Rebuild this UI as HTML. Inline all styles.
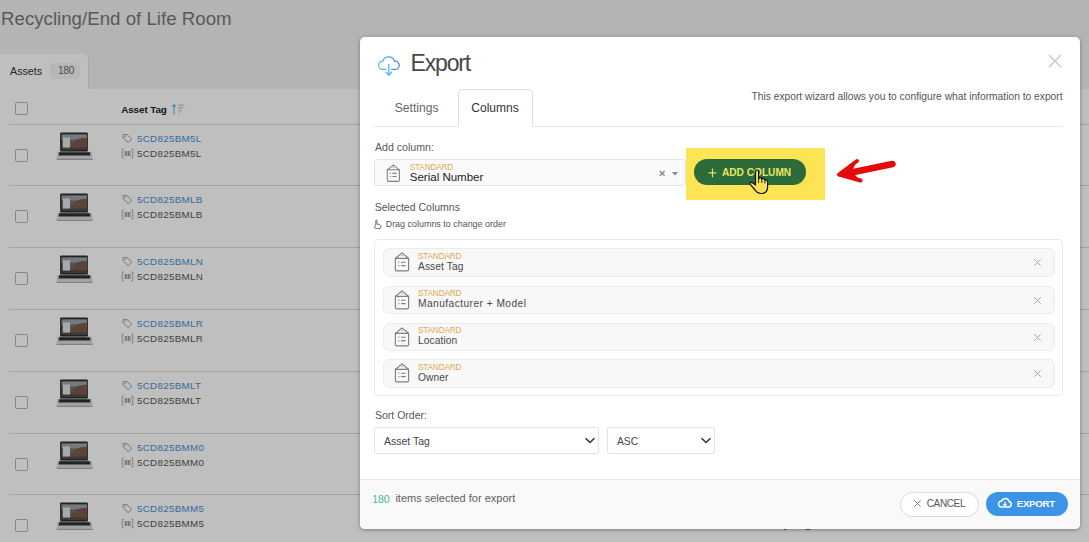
<!DOCTYPE html>
<html><head><meta charset="utf-8"><style>
html,body{margin:0;padding:0;width:1089px;height:542px;overflow:hidden;background:#fff}
body{position:relative;font-family:"Liberation Sans",sans-serif}
.t{position:absolute;line-height:1;white-space:nowrap}
.r{position:absolute;display:block}
</style></head><body>
<div class="r" style="left:0px;top:0px;width:1089px;height:89px;background:#f0f0f0"></div>
<div class="r" style="left:0px;top:89px;width:1089px;height:453px;background:#fff"></div>
<div class="r" style="left:0px;top:54px;width:89px;height:35px;background:#fff;border-top-right-radius:5px;border-right:1px solid #e2e2e2;box-sizing:border-box"></div>
<div class="t" style="left:1.00px;top:9.97px;font-size:18.7px;color:#787878;font-weight:400;">Recycling/End of Life Room</div>
<div class="t" style="left:10.00px;top:65.74px;font-size:10.7px;color:#333;font-weight:400;">Assets</div>
<div class="r" style="left:50px;top:62.5px;width:30px;height:16.5px;background:#f4f4f4;border-radius:3px"></div>
<div class="t" style="left:58.00px;top:66.05px;font-size:10.1px;color:#666;font-weight:400;letter-spacing:-0.3px">180</div>
<div class="r" style="left:15px;top:102px;width:13px;height:13px;border:1px solid #b4b4b4;border-radius:2px;box-sizing:border-box"></div>
<div class="t" style="left:121.20px;top:104.82px;font-size:9.9px;color:#222;font-weight:700;letter-spacing:-0.1px">Asset Tag</div>
<svg class="r" style="left:170px;top:102px" width="16" height="15" viewBox="0 0 16 15"><path d="M4 2.6V12.8 M2.2 4.6 L4 2.5 L5.8 4.6" stroke="#5cbaf2" stroke-width="1.1" fill="none"/><path d="M8 3.2H14.4 M8 6H13 M8 8.8H11.6 M8 11.6H10.2" stroke="#ccd3dc" stroke-width="1.4" fill="none"/></svg>
<div class="r" style="left:9px;top:124px;width:1080px;height:1px;background:#dcdcdc"></div>
<div class="r" style="left:15px;top:149.0px;width:13px;height:13px;border:1px solid #b4b4b4;border-radius:2px;box-sizing:border-box"></div>
<svg class="r" style="left:52px;top:128.0px" width="46" height="36" viewBox="0 0 46 36"><rect x="8.1" y="4.5" width="27.8" height="19.3" rx="1.2" fill="#2e2e2e"/><rect x="9.7" y="6.5" width="25.2" height="15.1" fill="#707070"/><rect x="9.7" y="6.5" width="25.2" height="5" fill="#9da2aa"/><rect x="11" y="9.5" width="7" height="10.5" fill="#dfe3e0"/><path d="M17 21.6 Q21 14 25 11.5 Q29 9.5 34.9 9.8 V21.6Z" fill="#7a5a4c"/><rect x="9.7" y="19.6" width="25.2" height="2" fill="#4a4a4a"/><path d="M5.2 23.8 H39.8 L40.6 31.2 Q40.6 31.8 40 31.8 H5 Q4.6 31.8 4.6 31.2Z" fill="#dadada"/><path d="M7 24.3 H38 L38.4 27.4 H6.6Z" fill="#2e2e2e"/><rect x="4.6" y="30.9" width="36" height="0.9" fill="#a0a0a0"/></svg>
<svg class="r" style="left:121px;top:132.5px" width="13" height="11" viewBox="0 0 13 11"><path d="M2.2 1.6 H6 L10.8 6.2 L7.2 9.6 L2.2 5Z" stroke="#9a9ea6" stroke-width="1" fill="none" stroke-linejoin="round"/><circle cx="4.2" cy="3.5" r="0.7" fill="#9a9ea6"/></svg>
<div class="t" style="left:137.00px;top:134.10px;font-size:9.8px;color:#4a8fd0;font-weight:400;letter-spacing:0.3px">5CD825BM5L</div>
<svg class="r" style="left:121px;top:147.5px" width="13" height="11" viewBox="0 0 13 11"><path d="M2.8 1.2H1.2V9.8H2.8 M10.2 1.2H11.8V9.8H10.2" stroke="#9aa0b0" stroke-width="0.9" fill="none"/><path d="M4.2 3V8 M5.8 3V8 M7.4 3V8 M9 3V8" stroke="#8a7a7a" stroke-width="0.9" fill="none"/></svg>
<div class="t" style="left:137.00px;top:149.10px;font-size:9.8px;color:#585858;font-weight:400;letter-spacing:0.3px">5CD825BM5L</div>
<div class="r" style="left:9px;top:185px;width:1080px;height:1px;background:#dcdcdc"></div>
<div class="r" style="left:15px;top:210.0px;width:13px;height:13px;border:1px solid #b4b4b4;border-radius:2px;box-sizing:border-box"></div>
<svg class="r" style="left:52px;top:189.0px" width="46" height="36" viewBox="0 0 46 36"><rect x="8.1" y="4.5" width="27.8" height="19.3" rx="1.2" fill="#2e2e2e"/><rect x="9.7" y="6.5" width="25.2" height="15.1" fill="#707070"/><rect x="9.7" y="6.5" width="25.2" height="5" fill="#9da2aa"/><rect x="11" y="9.5" width="7" height="10.5" fill="#dfe3e0"/><path d="M17 21.6 Q21 14 25 11.5 Q29 9.5 34.9 9.8 V21.6Z" fill="#7a5a4c"/><rect x="9.7" y="19.6" width="25.2" height="2" fill="#4a4a4a"/><path d="M5.2 23.8 H39.8 L40.6 31.2 Q40.6 31.8 40 31.8 H5 Q4.6 31.8 4.6 31.2Z" fill="#dadada"/><path d="M7 24.3 H38 L38.4 27.4 H6.6Z" fill="#2e2e2e"/><rect x="4.6" y="30.9" width="36" height="0.9" fill="#a0a0a0"/></svg>
<svg class="r" style="left:121px;top:193.5px" width="13" height="11" viewBox="0 0 13 11"><path d="M2.2 1.6 H6 L10.8 6.2 L7.2 9.6 L2.2 5Z" stroke="#9a9ea6" stroke-width="1" fill="none" stroke-linejoin="round"/><circle cx="4.2" cy="3.5" r="0.7" fill="#9a9ea6"/></svg>
<div class="t" style="left:137.00px;top:195.10px;font-size:9.8px;color:#4a8fd0;font-weight:400;letter-spacing:0.3px">5CD825BMLB</div>
<svg class="r" style="left:121px;top:208.5px" width="13" height="11" viewBox="0 0 13 11"><path d="M2.8 1.2H1.2V9.8H2.8 M10.2 1.2H11.8V9.8H10.2" stroke="#9aa0b0" stroke-width="0.9" fill="none"/><path d="M4.2 3V8 M5.8 3V8 M7.4 3V8 M9 3V8" stroke="#8a7a7a" stroke-width="0.9" fill="none"/></svg>
<div class="t" style="left:137.00px;top:210.10px;font-size:9.8px;color:#585858;font-weight:400;letter-spacing:0.3px">5CD825BMLB</div>
<div class="r" style="left:9px;top:247px;width:1080px;height:1px;background:#dcdcdc"></div>
<div class="r" style="left:15px;top:272.0px;width:13px;height:13px;border:1px solid #b4b4b4;border-radius:2px;box-sizing:border-box"></div>
<svg class="r" style="left:52px;top:251.0px" width="46" height="36" viewBox="0 0 46 36"><rect x="8.1" y="4.5" width="27.8" height="19.3" rx="1.2" fill="#2e2e2e"/><rect x="9.7" y="6.5" width="25.2" height="15.1" fill="#707070"/><rect x="9.7" y="6.5" width="25.2" height="5" fill="#9da2aa"/><rect x="11" y="9.5" width="7" height="10.5" fill="#dfe3e0"/><path d="M17 21.6 Q21 14 25 11.5 Q29 9.5 34.9 9.8 V21.6Z" fill="#7a5a4c"/><rect x="9.7" y="19.6" width="25.2" height="2" fill="#4a4a4a"/><path d="M5.2 23.8 H39.8 L40.6 31.2 Q40.6 31.8 40 31.8 H5 Q4.6 31.8 4.6 31.2Z" fill="#dadada"/><path d="M7 24.3 H38 L38.4 27.4 H6.6Z" fill="#2e2e2e"/><rect x="4.6" y="30.9" width="36" height="0.9" fill="#a0a0a0"/></svg>
<svg class="r" style="left:121px;top:255.5px" width="13" height="11" viewBox="0 0 13 11"><path d="M2.2 1.6 H6 L10.8 6.2 L7.2 9.6 L2.2 5Z" stroke="#9a9ea6" stroke-width="1" fill="none" stroke-linejoin="round"/><circle cx="4.2" cy="3.5" r="0.7" fill="#9a9ea6"/></svg>
<div class="t" style="left:137.00px;top:257.10px;font-size:9.8px;color:#4a8fd0;font-weight:400;letter-spacing:0.3px">5CD825BMLN</div>
<svg class="r" style="left:121px;top:270.5px" width="13" height="11" viewBox="0 0 13 11"><path d="M2.8 1.2H1.2V9.8H2.8 M10.2 1.2H11.8V9.8H10.2" stroke="#9aa0b0" stroke-width="0.9" fill="none"/><path d="M4.2 3V8 M5.8 3V8 M7.4 3V8 M9 3V8" stroke="#8a7a7a" stroke-width="0.9" fill="none"/></svg>
<div class="t" style="left:137.00px;top:272.10px;font-size:9.8px;color:#585858;font-weight:400;letter-spacing:0.3px">5CD825BMLN</div>
<div class="r" style="left:9px;top:309px;width:1080px;height:1px;background:#dcdcdc"></div>
<div class="r" style="left:15px;top:334.0px;width:13px;height:13px;border:1px solid #b4b4b4;border-radius:2px;box-sizing:border-box"></div>
<svg class="r" style="left:52px;top:313.0px" width="46" height="36" viewBox="0 0 46 36"><rect x="8.1" y="4.5" width="27.8" height="19.3" rx="1.2" fill="#2e2e2e"/><rect x="9.7" y="6.5" width="25.2" height="15.1" fill="#707070"/><rect x="9.7" y="6.5" width="25.2" height="5" fill="#9da2aa"/><rect x="11" y="9.5" width="7" height="10.5" fill="#dfe3e0"/><path d="M17 21.6 Q21 14 25 11.5 Q29 9.5 34.9 9.8 V21.6Z" fill="#7a5a4c"/><rect x="9.7" y="19.6" width="25.2" height="2" fill="#4a4a4a"/><path d="M5.2 23.8 H39.8 L40.6 31.2 Q40.6 31.8 40 31.8 H5 Q4.6 31.8 4.6 31.2Z" fill="#dadada"/><path d="M7 24.3 H38 L38.4 27.4 H6.6Z" fill="#2e2e2e"/><rect x="4.6" y="30.9" width="36" height="0.9" fill="#a0a0a0"/></svg>
<svg class="r" style="left:121px;top:317.5px" width="13" height="11" viewBox="0 0 13 11"><path d="M2.2 1.6 H6 L10.8 6.2 L7.2 9.6 L2.2 5Z" stroke="#9a9ea6" stroke-width="1" fill="none" stroke-linejoin="round"/><circle cx="4.2" cy="3.5" r="0.7" fill="#9a9ea6"/></svg>
<div class="t" style="left:137.00px;top:319.10px;font-size:9.8px;color:#4a8fd0;font-weight:400;letter-spacing:0.3px">5CD825BMLR</div>
<svg class="r" style="left:121px;top:332.5px" width="13" height="11" viewBox="0 0 13 11"><path d="M2.8 1.2H1.2V9.8H2.8 M10.2 1.2H11.8V9.8H10.2" stroke="#9aa0b0" stroke-width="0.9" fill="none"/><path d="M4.2 3V8 M5.8 3V8 M7.4 3V8 M9 3V8" stroke="#8a7a7a" stroke-width="0.9" fill="none"/></svg>
<div class="t" style="left:137.00px;top:334.10px;font-size:9.8px;color:#585858;font-weight:400;letter-spacing:0.3px">5CD825BMLR</div>
<div class="r" style="left:9px;top:371px;width:1080px;height:1px;background:#dcdcdc"></div>
<div class="r" style="left:15px;top:396.0px;width:13px;height:13px;border:1px solid #b4b4b4;border-radius:2px;box-sizing:border-box"></div>
<svg class="r" style="left:52px;top:375.0px" width="46" height="36" viewBox="0 0 46 36"><rect x="8.1" y="4.5" width="27.8" height="19.3" rx="1.2" fill="#2e2e2e"/><rect x="9.7" y="6.5" width="25.2" height="15.1" fill="#707070"/><rect x="9.7" y="6.5" width="25.2" height="5" fill="#9da2aa"/><rect x="11" y="9.5" width="7" height="10.5" fill="#dfe3e0"/><path d="M17 21.6 Q21 14 25 11.5 Q29 9.5 34.9 9.8 V21.6Z" fill="#7a5a4c"/><rect x="9.7" y="19.6" width="25.2" height="2" fill="#4a4a4a"/><path d="M5.2 23.8 H39.8 L40.6 31.2 Q40.6 31.8 40 31.8 H5 Q4.6 31.8 4.6 31.2Z" fill="#dadada"/><path d="M7 24.3 H38 L38.4 27.4 H6.6Z" fill="#2e2e2e"/><rect x="4.6" y="30.9" width="36" height="0.9" fill="#a0a0a0"/></svg>
<svg class="r" style="left:121px;top:379.5px" width="13" height="11" viewBox="0 0 13 11"><path d="M2.2 1.6 H6 L10.8 6.2 L7.2 9.6 L2.2 5Z" stroke="#9a9ea6" stroke-width="1" fill="none" stroke-linejoin="round"/><circle cx="4.2" cy="3.5" r="0.7" fill="#9a9ea6"/></svg>
<div class="t" style="left:137.00px;top:381.10px;font-size:9.8px;color:#4a8fd0;font-weight:400;letter-spacing:0.3px">5CD825BMLT</div>
<svg class="r" style="left:121px;top:394.5px" width="13" height="11" viewBox="0 0 13 11"><path d="M2.8 1.2H1.2V9.8H2.8 M10.2 1.2H11.8V9.8H10.2" stroke="#9aa0b0" stroke-width="0.9" fill="none"/><path d="M4.2 3V8 M5.8 3V8 M7.4 3V8 M9 3V8" stroke="#8a7a7a" stroke-width="0.9" fill="none"/></svg>
<div class="t" style="left:137.00px;top:396.10px;font-size:9.8px;color:#585858;font-weight:400;letter-spacing:0.3px">5CD825BMLT</div>
<div class="r" style="left:9px;top:433px;width:1080px;height:1px;background:#dcdcdc"></div>
<div class="r" style="left:15px;top:458.0px;width:13px;height:13px;border:1px solid #b4b4b4;border-radius:2px;box-sizing:border-box"></div>
<svg class="r" style="left:52px;top:437.0px" width="46" height="36" viewBox="0 0 46 36"><rect x="8.1" y="4.5" width="27.8" height="19.3" rx="1.2" fill="#2e2e2e"/><rect x="9.7" y="6.5" width="25.2" height="15.1" fill="#707070"/><rect x="9.7" y="6.5" width="25.2" height="5" fill="#9da2aa"/><rect x="11" y="9.5" width="7" height="10.5" fill="#dfe3e0"/><path d="M17 21.6 Q21 14 25 11.5 Q29 9.5 34.9 9.8 V21.6Z" fill="#7a5a4c"/><rect x="9.7" y="19.6" width="25.2" height="2" fill="#4a4a4a"/><path d="M5.2 23.8 H39.8 L40.6 31.2 Q40.6 31.8 40 31.8 H5 Q4.6 31.8 4.6 31.2Z" fill="#dadada"/><path d="M7 24.3 H38 L38.4 27.4 H6.6Z" fill="#2e2e2e"/><rect x="4.6" y="30.9" width="36" height="0.9" fill="#a0a0a0"/></svg>
<svg class="r" style="left:121px;top:441.5px" width="13" height="11" viewBox="0 0 13 11"><path d="M2.2 1.6 H6 L10.8 6.2 L7.2 9.6 L2.2 5Z" stroke="#9a9ea6" stroke-width="1" fill="none" stroke-linejoin="round"/><circle cx="4.2" cy="3.5" r="0.7" fill="#9a9ea6"/></svg>
<div class="t" style="left:137.00px;top:443.10px;font-size:9.8px;color:#4a8fd0;font-weight:400;letter-spacing:0.3px">5CD825BMM0</div>
<svg class="r" style="left:121px;top:456.5px" width="13" height="11" viewBox="0 0 13 11"><path d="M2.8 1.2H1.2V9.8H2.8 M10.2 1.2H11.8V9.8H10.2" stroke="#9aa0b0" stroke-width="0.9" fill="none"/><path d="M4.2 3V8 M5.8 3V8 M7.4 3V8 M9 3V8" stroke="#8a7a7a" stroke-width="0.9" fill="none"/></svg>
<div class="t" style="left:137.00px;top:458.10px;font-size:9.8px;color:#585858;font-weight:400;letter-spacing:0.3px">5CD825BMM0</div>
<div class="r" style="left:9px;top:494px;width:1080px;height:1px;background:#dcdcdc"></div>
<div class="r" style="left:15px;top:519.0px;width:13px;height:13px;border:1px solid #b4b4b4;border-radius:2px;box-sizing:border-box"></div>
<svg class="r" style="left:52px;top:498.0px" width="46" height="36" viewBox="0 0 46 36"><rect x="8.1" y="4.5" width="27.8" height="19.3" rx="1.2" fill="#2e2e2e"/><rect x="9.7" y="6.5" width="25.2" height="15.1" fill="#707070"/><rect x="9.7" y="6.5" width="25.2" height="5" fill="#9da2aa"/><rect x="11" y="9.5" width="7" height="10.5" fill="#dfe3e0"/><path d="M17 21.6 Q21 14 25 11.5 Q29 9.5 34.9 9.8 V21.6Z" fill="#7a5a4c"/><rect x="9.7" y="19.6" width="25.2" height="2" fill="#4a4a4a"/><path d="M5.2 23.8 H39.8 L40.6 31.2 Q40.6 31.8 40 31.8 H5 Q4.6 31.8 4.6 31.2Z" fill="#dadada"/><path d="M7 24.3 H38 L38.4 27.4 H6.6Z" fill="#2e2e2e"/><rect x="4.6" y="30.9" width="36" height="0.9" fill="#a0a0a0"/></svg>
<svg class="r" style="left:121px;top:502.5px" width="13" height="11" viewBox="0 0 13 11"><path d="M2.2 1.6 H6 L10.8 6.2 L7.2 9.6 L2.2 5Z" stroke="#9a9ea6" stroke-width="1" fill="none" stroke-linejoin="round"/><circle cx="4.2" cy="3.5" r="0.7" fill="#9a9ea6"/></svg>
<div class="t" style="left:137.00px;top:504.10px;font-size:9.8px;color:#4a8fd0;font-weight:400;letter-spacing:0.3px">5CD825BMM5</div>
<svg class="r" style="left:121px;top:517.5px" width="13" height="11" viewBox="0 0 13 11"><path d="M2.8 1.2H1.2V9.8H2.8 M10.2 1.2H11.8V9.8H10.2" stroke="#9aa0b0" stroke-width="0.9" fill="none"/><path d="M4.2 3V8 M5.8 3V8 M7.4 3V8 M9 3V8" stroke="#8a7a7a" stroke-width="0.9" fill="none"/></svg>
<div class="t" style="left:137.00px;top:519.10px;font-size:9.8px;color:#585858;font-weight:400;letter-spacing:0.3px">5CD825BMM5</div>
<div class="r" style="left:784px;top:529px;width:2px;height:1px;background:#6a6a6a"></div>
<div class="r" style="left:806px;top:529px;width:4px;height:1px;background:#6a6a6a"></div>
<div class="r" style="left:0px;top:0px;width:1089px;height:542px;background:rgba(0,0,0,0.25)"></div>
<div class="r" style="left:360px;top:37px;width:720px;height:492px;background:#fff;border-radius:5px;box-shadow:0 1px 4px rgba(0,0,0,0.35)"></div>
<div class="r" style="left:360px;top:479px;width:720px;height:50px;background:#f9f9f9;border-top:1px solid #e9e9e9;border-radius:0 0 5px 5px;box-sizing:border-box"></div>
<svg class="r" style="left:374px;top:50px" width="30" height="30" viewBox="0 0 30 30"><defs><linearGradient id="cg" x1="0" y1="0" x2="1" y2="0"><stop offset="0" stop-color="#3ed6da"/><stop offset="1" stop-color="#4e78e0"/></linearGradient></defs><path d="M12.4 19.4 H8.2 A3.95 3.95 0 0 1 8.7 11.4 A6.2 6.2 0 0 1 20.6 11.2 A3.95 3.95 0 0 1 21.6 19.4 H17.2" stroke="url(#cg)" stroke-width="1.25" fill="none"/><path d="M14.8 14 V25 M11.6 21.8 L14.8 25.2 L18 21.8" stroke="#57b4ea" stroke-width="1.3" fill="none"/></svg>
<div class="t" style="left:410.50px;top:51.53px;font-size:23px;color:#484848;font-weight:400;letter-spacing:-1.15px">Export</div>
<svg class="r" style="left:1048px;top:54px" width="14" height="14" viewBox="0 0 14 14"><path d="M1 1L13 13M13 1L1 13" stroke="#c8c8c8" stroke-width="1.4"/></svg>
<div class="r" style="left:374px;top:126px;width:689px;height:1px;background:#e6e6e6"></div>
<div class="r" style="left:457.5px;top:89px;width:75.5px;height:38px;background:#fff;border:1px solid #dedede;border-bottom:none;border-radius:5px 5px 0 0;box-sizing:border-box"></div>
<div class="t" style="left:394.75px;top:101.56px;font-size:12.1px;color:#666;font-weight:400;">Settings</div>
<div class="t" style="left:471.30px;top:101.64px;font-size:12.0px;color:#333;font-weight:400;">Columns</div>
<div class="t" style="left:751.50px;top:91.52px;font-size:10.25px;color:#555;font-weight:400;">This export wizard allows you to configure what information to export</div>
<div class="t" style="left:375.00px;top:142.33px;font-size:10.6px;color:#5a5a5a;font-weight:400;">Add column:</div>
<div class="r" style="left:374px;top:159px;width:312px;height:27px;background:#fafafa;border:1px solid #e4e4e4;border-radius:3px;box-sizing:border-box"></div>
<svg class="r" style="left:385.5px;top:163.5px" width="14.72" height="18.400000000000002" viewBox="0 0 16 20"><path d="M2.6 6.2 H1.4 V17.5 Q1.4 18.9 2.8 18.9 H13.2 Q14.6 18.9 14.6 17.5 V6.2 H13.4" stroke="#7c8088" stroke-width="1.15" fill="none"/><path d="M1.6 6.3 L8 0.9 L14.4 6.3 Z" stroke="#7c8088" stroke-width="1.15" fill="none" stroke-linejoin="round"/><circle cx="8" cy="3.6" r="0.7" fill="#7c8088"/><path d="M4.2 10.2 H5.4 M4.2 13.6 H5.4" stroke="#a08a80" stroke-width="1.2" fill="none"/><path d="M7 10.2 H11.6 M7 13.6 H11.6" stroke="#7c8088" stroke-width="1.1" fill="none"/></svg>
<div class="t" style="left:409.80px;top:163.66px;font-size:8.2px;color:#e0a94e;font-weight:400;letter-spacing:-0.15px">STANDARD</div>
<div class="t" style="left:409.80px;top:172.27px;font-size:11.5px;color:#222;font-weight:400;">Serial Number</div>
<svg class="r" style="left:658px;top:169px" width="22" height="10" viewBox="0 0 22 10"><path d="M1.8 2L6.6 6.8M6.6 2L1.8 6.8" stroke="#888" stroke-width="1.4"/><path d="M14 3H20L17 6.6Z" fill="#888"/></svg>
<div class="r" style="left:686px;top:148px;width:139px;height:52px;background:#fde455"></div>
<div class="r" style="left:694px;top:159px;width:112px;height:26px;background:#2c6c3b;border-radius:13px"></div>
<svg class="r" style="left:708px;top:166.5px" width="10" height="12" viewBox="0 0 10 12"><path d="M4.5 1.5V10.3M0.6 5.9H8.4" stroke="#e2e660" stroke-width="1.2"/></svg>
<div class="t" style="left:722.00px;top:168.21px;font-size:10.15px;color:#e8e466;font-weight:700;">ADD COLUMN</div>
<svg class="r" style="left:748px;top:168px" width="22" height="28" viewBox="0 0 22 28"><path d="M7.5 17 V4 Q7.5 2 9 2 Q10.6 2 10.6 4 V11 Q11 9.4 12.4 9.6 Q13.8 9.8 13.8 11.4 Q14.4 10.2 15.6 10.5 Q16.8 10.8 16.9 12.4 Q17.6 11.6 18.6 12 Q19.6 12.4 19.6 14 V19 Q19.6 25.5 13 25.5 Q9.5 25.5 7.5 22.5 L2.4 16.6 Q1.4 15.3 2.6 14.6 Q3.8 13.9 5 15Z" fill="#f6e25a" stroke="#111" stroke-width="1.2" stroke-linejoin="round"/><path d="M10.6 11 V15 M13.8 11.4 V15 M16.9 12.4 V15.5" stroke="#111" stroke-width="0.9"/></svg>
<svg class="r" style="left:830px;top:150px" width="70" height="40" viewBox="830 150 70 40"><path d="M892.5 164 L849 173" stroke="#e60b0b" stroke-width="6.5" stroke-linecap="round"/><path d="M857 161 L839 174.5 L860.5 180.5" stroke="#e60b0b" stroke-width="4" stroke-linecap="round" stroke-linejoin="round" fill="none"/><path d="M856 162 L841 174.3 L859 179 L852 172Z" fill="#e60b0b"/></svg>
<div class="t" style="left:374.70px;top:202.41px;font-size:10.5px;color:#555;font-weight:400;">Selected Columns</div>
<svg class="r" style="left:370px;top:214.8px" width="14" height="16" viewBox="0 0 14 16"><path d="M5.8 10.2 V5.7 Q5.8 5 6.4 5 Q7 5 7 5.7 V9.1 Q10.6 9.1 10.8 10.6 V12 Q10.8 13.6 9 13.6 H6.5 Q4.8 13.6 4.6 12 Q4.5 10.7 5.8 10.2" stroke="#6a6a6a" stroke-width="1" fill="none"/></svg>
<div class="t" style="left:385.70px;top:220.22px;font-size:8.95px;color:#555;font-weight:400;">Drag columns to change order</div>
<div class="r" style="left:374px;top:239px;width:689px;height:157px;border:1px solid #e9e9e9;border-radius:4px;box-sizing:border-box"></div>
<div class="r" style="left:383px;top:248px;width:672px;height:28.5px;background:#f8f8f8;border:1px solid #ececec;border-radius:6px;box-sizing:border-box"></div>
<svg class="r" style="left:394px;top:252px" width="16.0" height="20.0" viewBox="0 0 16 20"><path d="M2.6 6.2 H1.4 V17.5 Q1.4 18.9 2.8 18.9 H13.2 Q14.6 18.9 14.6 17.5 V6.2 H13.4" stroke="#7c8088" stroke-width="1.15" fill="none"/><path d="M1.6 6.3 L8 0.9 L14.4 6.3 Z" stroke="#7c8088" stroke-width="1.15" fill="none" stroke-linejoin="round"/><circle cx="8" cy="3.6" r="0.7" fill="#7c8088"/><path d="M4.2 10.2 H5.4 M4.2 13.6 H5.4" stroke="#a08a80" stroke-width="1.2" fill="none"/><path d="M7 10.2 H11.6 M7 13.6 H11.6" stroke="#7c8088" stroke-width="1.1" fill="none"/></svg>
<div class="t" style="left:418.00px;top:252.96px;font-size:8.2px;color:#e0a94e;font-weight:400;letter-spacing:-0.15px">STANDARD</div>
<div class="t" style="left:418.00px;top:261.97px;font-size:10.2px;color:#484848;font-weight:400;letter-spacing:0.1px">Asset Tag</div>
<svg class="r" style="left:1033px;top:258px" width="9" height="9" viewBox="0 0 9 9"><path d="M1.2 1.2L7.8 7.8M7.8 1.2L1.2 7.8" stroke="#c49aa6" stroke-width="1"/></svg>
<div class="r" style="left:383px;top:285.5px;width:672px;height:28.5px;background:#f8f8f8;border:1px solid #ececec;border-radius:6px;box-sizing:border-box"></div>
<svg class="r" style="left:394px;top:289.5px" width="16.0" height="20.0" viewBox="0 0 16 20"><path d="M2.6 6.2 H1.4 V17.5 Q1.4 18.9 2.8 18.9 H13.2 Q14.6 18.9 14.6 17.5 V6.2 H13.4" stroke="#7c8088" stroke-width="1.15" fill="none"/><path d="M1.6 6.3 L8 0.9 L14.4 6.3 Z" stroke="#7c8088" stroke-width="1.15" fill="none" stroke-linejoin="round"/><circle cx="8" cy="3.6" r="0.7" fill="#7c8088"/><path d="M4.2 10.2 H5.4 M4.2 13.6 H5.4" stroke="#a08a80" stroke-width="1.2" fill="none"/><path d="M7 10.2 H11.6 M7 13.6 H11.6" stroke="#7c8088" stroke-width="1.1" fill="none"/></svg>
<div class="t" style="left:418.00px;top:290.46px;font-size:8.2px;color:#e0a94e;font-weight:400;letter-spacing:-0.15px">STANDARD</div>
<div class="t" style="left:418.00px;top:299.47px;font-size:10.2px;color:#484848;font-weight:400;letter-spacing:0.45px">Manufacturer + Model</div>
<svg class="r" style="left:1033px;top:295.5px" width="9" height="9" viewBox="0 0 9 9"><path d="M1.2 1.2L7.8 7.8M7.8 1.2L1.2 7.8" stroke="#c49aa6" stroke-width="1"/></svg>
<div class="r" style="left:383px;top:322.5px;width:672px;height:28.5px;background:#f8f8f8;border:1px solid #ececec;border-radius:6px;box-sizing:border-box"></div>
<svg class="r" style="left:394px;top:326.5px" width="16.0" height="20.0" viewBox="0 0 16 20"><path d="M2.6 6.2 H1.4 V17.5 Q1.4 18.9 2.8 18.9 H13.2 Q14.6 18.9 14.6 17.5 V6.2 H13.4" stroke="#7c8088" stroke-width="1.15" fill="none"/><path d="M1.6 6.3 L8 0.9 L14.4 6.3 Z" stroke="#7c8088" stroke-width="1.15" fill="none" stroke-linejoin="round"/><circle cx="8" cy="3.6" r="0.7" fill="#7c8088"/><path d="M4.2 10.2 H5.4 M4.2 13.6 H5.4" stroke="#a08a80" stroke-width="1.2" fill="none"/><path d="M7 10.2 H11.6 M7 13.6 H11.6" stroke="#7c8088" stroke-width="1.1" fill="none"/></svg>
<div class="t" style="left:418.00px;top:327.46px;font-size:8.2px;color:#e0a94e;font-weight:400;letter-spacing:-0.15px">STANDARD</div>
<div class="t" style="left:418.00px;top:336.47px;font-size:10.2px;color:#484848;font-weight:400;letter-spacing:0.1px">Location</div>
<svg class="r" style="left:1033px;top:332.5px" width="9" height="9" viewBox="0 0 9 9"><path d="M1.2 1.2L7.8 7.8M7.8 1.2L1.2 7.8" stroke="#c49aa6" stroke-width="1"/></svg>
<div class="r" style="left:383px;top:359px;width:672px;height:28.5px;background:#f8f8f8;border:1px solid #ececec;border-radius:6px;box-sizing:border-box"></div>
<svg class="r" style="left:394px;top:363px" width="16.0" height="20.0" viewBox="0 0 16 20"><path d="M2.6 6.2 H1.4 V17.5 Q1.4 18.9 2.8 18.9 H13.2 Q14.6 18.9 14.6 17.5 V6.2 H13.4" stroke="#7c8088" stroke-width="1.15" fill="none"/><path d="M1.6 6.3 L8 0.9 L14.4 6.3 Z" stroke="#7c8088" stroke-width="1.15" fill="none" stroke-linejoin="round"/><circle cx="8" cy="3.6" r="0.7" fill="#7c8088"/><path d="M4.2 10.2 H5.4 M4.2 13.6 H5.4" stroke="#a08a80" stroke-width="1.2" fill="none"/><path d="M7 10.2 H11.6 M7 13.6 H11.6" stroke="#7c8088" stroke-width="1.1" fill="none"/></svg>
<div class="t" style="left:418.00px;top:363.96px;font-size:8.2px;color:#e0a94e;font-weight:400;letter-spacing:-0.15px">STANDARD</div>
<div class="t" style="left:418.00px;top:372.97px;font-size:10.2px;color:#484848;font-weight:400;letter-spacing:0.1px">Owner</div>
<svg class="r" style="left:1033px;top:369px" width="9" height="9" viewBox="0 0 9 9"><path d="M1.2 1.2L7.8 7.8M7.8 1.2L1.2 7.8" stroke="#c49aa6" stroke-width="1"/></svg>
<div class="t" style="left:375.00px;top:410.11px;font-size:10.5px;color:#555;font-weight:400;">Sort Order:</div>
<div class="r" style="left:374px;top:427px;width:225px;height:27px;background:#fff;border:1px solid #e2e2e2;border-radius:2px;box-sizing:border-box"></div>
<div class="t" style="left:384.00px;top:436.11px;font-size:10.5px;color:#444;font-weight:400;">Asset Tag</div>
<svg class="r" style="left:584px;top:436px" width="12" height="9" viewBox="0 0 12 9"><path d="M1.6 2.2L6 6.5L10.4 2.2" stroke="#333" stroke-width="1.6" fill="none"/></svg>
<div class="r" style="left:607px;top:427px;width:107.5px;height:27px;background:#fff;border:1px solid #e2e2e2;border-radius:2px;box-sizing:border-box"></div>
<div class="t" style="left:617.00px;top:437.08px;font-size:10.3px;color:#444;font-weight:400;">ASC</div>
<svg class="r" style="left:700px;top:436px" width="12" height="9" viewBox="0 0 12 9"><path d="M1.6 2.2L6 6.5L10.4 2.2" stroke="#333" stroke-width="1.6" fill="none"/></svg>
<div class="t" style="left:372.20px;top:493.63px;font-size:10.6px;color:#45b9a0;font-weight:400;letter-spacing:-0.1px">180</div>
<div class="t" style="left:395.40px;top:493.29px;font-size:11.0px;color:#606060;font-weight:400;">items selected for export</div>
<div class="r" style="left:900px;top:491.5px;width:79px;height:25.0px;background:#fff;border:1px solid #dcdcdc;border-radius:13px;box-sizing:border-box"></div>
<svg class="r" style="left:913px;top:499px" width="9" height="10" viewBox="0 0 9 10"><path d="M1.3 1.3L7.7 7.7M7.7 1.3L1.3 7.7" stroke="#777" stroke-width="0.9"/></svg>
<div class="t" style="left:926.70px;top:498.54px;font-size:10px;color:#555;font-weight:400;letter-spacing:-0.35px">CANCEL</div>
<div class="r" style="left:986px;top:492px;width:82px;height:24px;background:#3c94e8;border-radius:12px"></div>
<svg class="r" style="left:995px;top:494px" width="20" height="18" viewBox="0 0 20 18"><path d="M6.2 13 H13.8 A2.8 2.8 0 0 0 14.1 7.5 A3.9 3.9 0 0 0 6.7 7.1 A2.95 2.95 0 0 0 6.2 13 Z" stroke="#fff" stroke-width="1.5" fill="none"/><path d="M10 7.8 V11.8 M8.3 10.1 L10 11.9 L11.7 10.1" stroke="#fff" stroke-width="1.2" fill="none"/></svg>
<div class="t" style="left:1016.80px;top:499.07px;font-size:9.6px;color:#fff;font-weight:700;letter-spacing:-0.25px">EXPORT</div>
</body></html>
